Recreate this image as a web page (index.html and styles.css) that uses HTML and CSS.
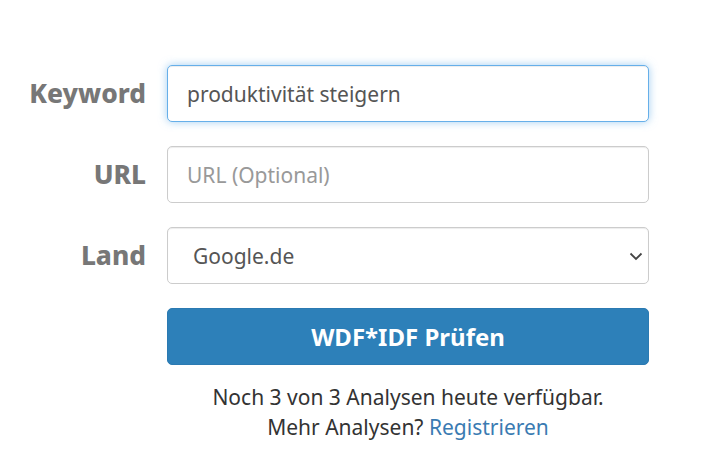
FILE: index.html
```html
<!DOCTYPE html>
<html lang="de">
<head>
<meta charset="utf-8">
<link rel="stylesheet" href="styles.css">
</head>
<body>
<form class="wdf-form">
  <label class="field-label" for="kw">Keyword</label>
  <input class="field-input is-focus" id="kw" type="text" value="produktivität steigern">
  <label class="field-label" for="url">URL</label>
  <input class="field-input" id="url" type="text" placeholder="URL (Optional)">
  <label class="field-label" for="land">Land</label>
  <div class="select-wrap">
    <select class="field-input field-select" id="land">
      <option>Google.de</option>
    </select>
    <svg class="select-arrow" width="14" height="10" viewBox="0 0 14 10"><path d="M1.5 2.5l5.5 5.5 5.5-5.5" fill="none" stroke="#444" stroke-width="1.8"/></svg>
  </div>
  <div class="spacer"></div>
  <button type="button" class="btn-submit">WDF*IDF Prüfen</button>
  <div class="spacer"></div>
  <p class="note">Noch 3 von 3 Analysen heute verfügbar.<br>Mehr Analysen? <a href="#" class="note-link">Registrieren</a></p>
</form>
</body>
</html>
```
FILE: styles.css
```css
html, body {
  margin: 0;
  padding: 0;
  background: #fff;
}
body {
  font-family: "Noto Sans", "Open Sans", sans-serif;
  color: #333;
}
.wdf-form {
  display: grid;
  grid-template-columns: 138px 482px;
  grid-auto-rows: auto;
  column-gap: 21px;
  row-gap: 24px;
  padding: 65px 0 0 8px;
  align-items: center;
}
.field-label {
  text-align: right;
  font-weight: 800;
  font-size: 26.3px;
  color: #777;
  line-height: 57px;
}
.field-input {
  box-sizing: border-box;
  width: 482px;
  height: 57px;
  margin: 0;
  padding: 0 19px;
  font-family: inherit;
  font-size: 21px;
  color: #555;
  background: #fff;
  border: 1px solid #ccc;
  border-radius: 5px;
  box-shadow: inset 0 1px 1px rgba(0,0,0,0.075);
  outline: none;
}
.field-input::placeholder {
  color: #999;
}
.field-input.is-focus {
  border-color: #66afe9;
  box-shadow: inset 0 1px 1px rgba(0,0,0,0.075), 0 0 8px rgba(102,175,233,0.6);
}
.select-wrap {
  position: relative;
  height: 57px;
}
.field-select {
  appearance: none;
  -webkit-appearance: none;
  padding-left: 25px;
}
.select-arrow {
  position: absolute;
  right: 6px;
  top: 24px;
}
.spacer {
  height: 0;
}
.btn-submit {
  box-sizing: border-box;
  width: 482px;
  height: 57px;
  margin: 0;
  border: 1px solid #2b7ab2;
  border-radius: 5px;
  background: #2d80b9;
  color: #fff;
  font-family: inherit;
  font-weight: 700;
  font-size: 24px;
}
.note {
  margin: -7px 0 0;
  text-align: center;
  font-size: 21px;
  line-height: 30px;
  color: #333;
}
.note-link {
  color: #3a7bb2;
  text-decoration: none;
}
```
